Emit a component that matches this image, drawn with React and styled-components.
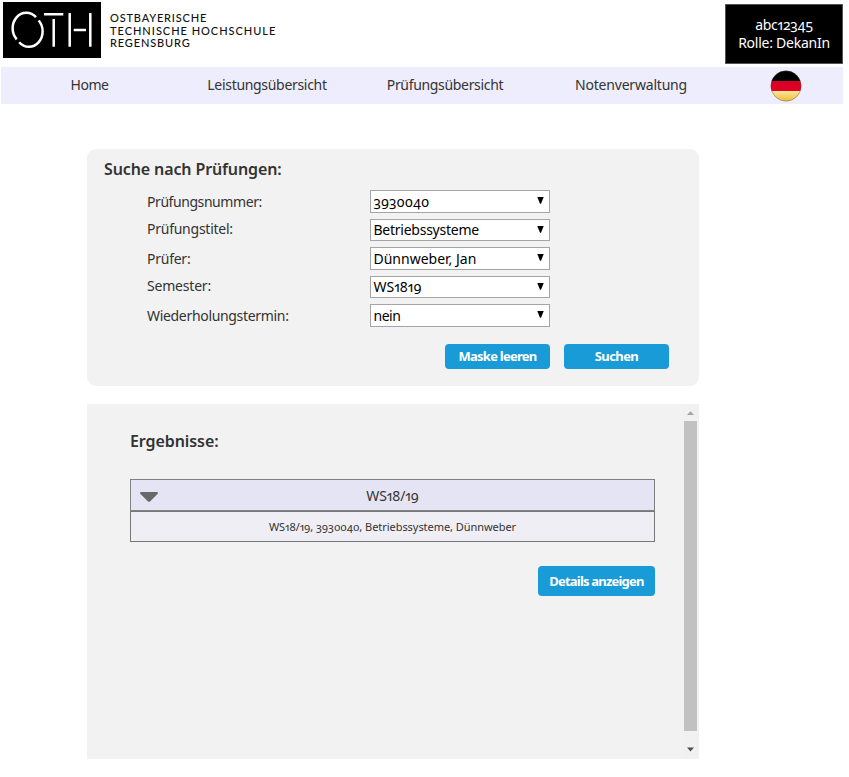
import React from "react";
import styled, { createGlobalStyle } from "styled-components";

const GlobalStyle = createGlobalStyle`
  * { box-sizing: border-box; }
  body {
    margin: 0;
    background: #fff;
    color: #333;
    font-family: "Noto Sans", sans-serif;
    font-size: 14px;
    font-variant-numeric: oldstyle-nums proportional-nums;
  }
`;

const Page = styled.div`
  width: 849px;
  height: 777px;
  overflow: hidden;
`;

const Header = styled.header`
  height: 67px;
  display: flex;
  align-items: flex-start;
  padding: 2px 6px 0 3px;
`;

const LogoMark = styled.svg`
  width: 98px;
  height: 56px;
  display: block;
`;

const LogoText = styled.div`
  margin: 10px auto 0 9px;
  font: 500 11px/12.5px Lato, sans-serif;
  color: #111;
  white-space: nowrap;
`;

const Line = styled.div`
  letter-spacing: ${(p) => p.$ls || 0}px;
`;

const UserBox = styled.div`
  width: 118px;
  height: 60px;
  margin-top: 2px;
  border: 1px solid #555;
  background: #000;
  color: #fff;
  text-align: center;
  line-height: 18px;
  padding-top: 11px;
  white-space: nowrap;
`;

const Nav = styled.nav`
  height: 37px;
  margin: 0 6px 0 1px;
  background: #eeedfd;
  display: grid;
  grid-template-columns: 177px 178px 178px 194px 115px;
  justify-items: center;
  align-items: center;
`;

const NavLink = styled.a`
  padding-bottom: 2px;
  letter-spacing: ${(p) => p.$ls || 0}px;
  white-space: nowrap;
`;

const Flag = styled.svg`
  width: 32px;
  height: 32px;
  display: block;
`;

const Main = styled.main`
  width: 612px;
  margin: 45px 0 0 87px;
`;

const SearchPanel = styled.section`
  height: 237px;
  background: #f2f2f2;
  border-radius: 9px;
  padding: 9px 30px 0 17px;
`;

const Title = styled.h2`
  margin: 0;
  font-size: 16px;
  line-height: 22px;
  font-weight: 600;
  letter-spacing: ${(p) => p.$ls || 0}px;
`;

const Fields = styled.div`
  padding: 10.4px 0 0 43px;
`;

const Field = styled.div`
  height: 28.5px;
  display: grid;
  grid-template-columns: 223px 180px;
  align-items: start;
`;

const Label = styled.label`
  line-height: 20px;
  padding-top: ${(p) => p.$top}px;
  letter-spacing: ${(p) => p.$ls || 0}px;
  white-space: nowrap;
`;

const Select = styled.div`
  height: 22.5px;
  border: 1px solid #a5a5a5;
  background: #fff;
  color: #000;
  padding: 0 5px 0 2.5px;
  display: flex;
  justify-content: space-between;
  line-height: 20px;
`;

const Value = styled.span`
  padding-top: 0.5px;
  letter-spacing: ${(p) => p.$ls || 0}px;
  white-space: nowrap;
`;

const SelectArrow = styled.svg`
  width: 7px;
  height: 7px;
  margin-top: 6px;
`;

const Actions = styled.div`
  display: flex;
  justify-content: flex-end;
  gap: 14px;
  margin-top: 11.1px;
`;

const Button = styled.button`
  width: ${(p) => p.$w}px;
  height: ${(p) => p.$h}px;
  border: 0;
  border-radius: 4px;
  padding: 0;
  background: #189bd7;
  color: #fff;
  font: 700 13px/18px "Noto Sans", sans-serif;
  letter-spacing: ${(p) => p.$ls || 0}px;
  white-space: nowrap;
`;

const ResultPanel = styled.section`
  height: 355px;
  margin-top: 18px;
  background: #f2f2f2;
  display: flex;
`;

const ResultBody = styled.div`
  width: 595px;
  padding: 26px 27px 0 43px;
`;

const Group = styled.div`
  margin-top: 27px;
`;

const GroupHead = styled.div`
  height: 32px;
  border: 1px solid #808080;
  background: #e5e4f4;
  display: grid;
  grid-template-columns: 36px 1fr 36px;
  align-items: center;
  text-align: center;
`;

const GroupArrow = styled.svg`
  width: 18px;
  height: 10px;
  margin: 3px 0 0 9px;
`;

const GroupRow = styled.div`
  height: 31px;
  border: 1px solid #777;
  background: #efeef5;
  text-align: center;
  font-size: 11px;
  line-height: 29px;
  letter-spacing: ${(p) => p.$ls || 0}px;
  white-space: nowrap;
`;

const DetailActions = styled.div`
  display: flex;
  justify-content: flex-end;
  margin-top: 24px;
`;

const Scrollbar = styled.div`
  width: 17px;
  background: #f1f1f1;
  display: flex;
  flex-direction: column;
  align-items: center;
`;

const ScrollArrow = styled.svg`
  width: 17px;
  height: 17px;
  display: block;
`;

const Thumb = styled.div`
  width: 13px;
  height: 310px;
  margin-bottom: 11px;
  background: #c1c1c1;
`;

const links = [
  { text: "Home", ls: -0.5 },
  { text: "Leistungsübersicht", ls: -0.31 },
  { text: "Prüfungsübersicht", ls: -0.33 },
  { text: "Notenverwaltung", ls: -0.2 },
];

const fields = [
  { label: "Prüfungsnummer:", value: "3930040", top: 2, ls: -0.43, vls: 0 },
  { label: "Prüfungstitel:", value: "Betriebssysteme", top: 0.5, ls: -0.25, vls: -0.25 },
  { label: "Prüfer:", value: "Dünnweber, Jan", top: 2, ls: -0.25, vls: 0 },
  { label: "Semester:", value: "WS1819", top: 0.5, ls: -0.2, vls: 0 },
  { label: "Wiederholungstermin:", value: "nein", top: 2, ls: -0.32, vls: -0.5 },
];

export default function App() {
  return (
    <Page>
      <GlobalStyle />
      <Header>
        <LogoMark viewBox="0 0 98 56">
          <rect width="98" height="56" fill="#000" />
          <g fill="none" stroke="#fff" strokeWidth="2.5">
            <path d="M33 15.2A13.6 15.4 0 0 0 13.7 37.3" />
            <path d="M16.2 40.2A13.6 15.4 0 0 0 35.7 18.5" />
            <path d="M41 12.3H60.3M50.7 17V44.7M66.7 11V44.7M70.7 28H83M87.3 11V44.7" />
          </g>
        </LogoMark>
        <LogoText>
          <Line $ls={0.82}>OSTBAYERISCHE</Line>
          <Line $ls={0.98}>TECHNISCHE HOCHSCHULE</Line>
          <Line $ls={0.85}>REGENSBURG</Line>
        </LogoText>
        <UserBox>
          <Line $ls={-0.25}>abc12345</Line>
          <Line $ls={-0.25}>Rolle: DekanIn</Line>
        </UserBox>
      </Header>
      <Nav>
        {links.map((l) => (
          <NavLink key={l.text} $ls={l.ls}>{l.text}</NavLink>
        ))}
        <Flag viewBox="0 0 32 32">
          <defs>
            <clipPath id="disc"><circle cx="16" cy="16" r="15.2" /></clipPath>
            <linearGradient id="gold" x2="0" y2="1">
              <stop offset="0" stopColor="#ffe89a" />
              <stop offset="1" stopColor="#e9b935" />
            </linearGradient>
            <linearGradient id="red" x2="0" y2="1">
              <stop offset="0" stopColor="#d8002a" />
              <stop offset="1" stopColor="#e00022" />
            </linearGradient>
          </defs>
          <g clipPath="url(#disc)">
            <rect width="32" height="11" fill="#000" />
            <rect y="11" width="32" height="10" fill="url(#red)" />
            <rect y="21" width="32" height="11" fill="url(#gold)" />
          </g>
          <circle cx="16" cy="16" r="15.1" fill="none" stroke="#5a4a30" strokeOpacity=".4" />
        </Flag>
      </Nav>
      <Main>
        <SearchPanel>
          <Title $ls={-0.12}>Suche nach Prüfungen:</Title>
          <Fields>
            {fields.map((f) => (
              <Field key={f.label}>
                <Label $top={f.top} $ls={f.ls}>{f.label}</Label>
                <Select>
                  <Value $ls={f.vls}>{f.value}</Value>
                  <SelectArrow viewBox="0 0 7 7"><path d="M0.3 0H6.7L4 6.7H3Z" /></SelectArrow>
                </Select>
              </Field>
            ))}
          </Fields>
          <Actions>
            <Button $w={105} $h={25} $ls={-0.75}>Maske leeren</Button>
            <Button $w={105} $h={25} $ls={-0.6}>Suchen</Button>
          </Actions>
        </SearchPanel>
        <ResultPanel>
          <ResultBody>
            <Title $ls={-0.08}>Ergebnisse:</Title>
            <Group>
              <GroupHead>
                <GroupArrow viewBox="0 0 18 10">
                  <path d="M1 0H17Q18 0 18 1.4L10 9.4Q9 10.3 8 9.4L0 1.4Q0 0 1 0Z" fill="#686868" />
                </GroupArrow>
                <Line $ls={-0.1}>WS18/19</Line>
              </GroupHead>
              <GroupRow $ls={-0.05}>WS18/19, 3930040, Betriebssysteme, Dünnweber</GroupRow>
            </Group>
            <DetailActions>
              <Button $w={117} $h={30} $ls={-0.8}>Details anzeigen</Button>
            </DetailActions>
          </ResultBody>
          <Scrollbar>
            <ScrollArrow viewBox="0 0 17 17"><path d="M5 11L8.5 7.2L12 11Z" fill="#a3a3a3" /></ScrollArrow>
            <Thumb />
            <ScrollArrow viewBox="0 0 17 17"><path d="M5 5.5H12L8.5 9.5Z" fill="#505050" /></ScrollArrow>
          </Scrollbar>
        </ResultPanel>
      </Main>
    </Page>
  );
}
